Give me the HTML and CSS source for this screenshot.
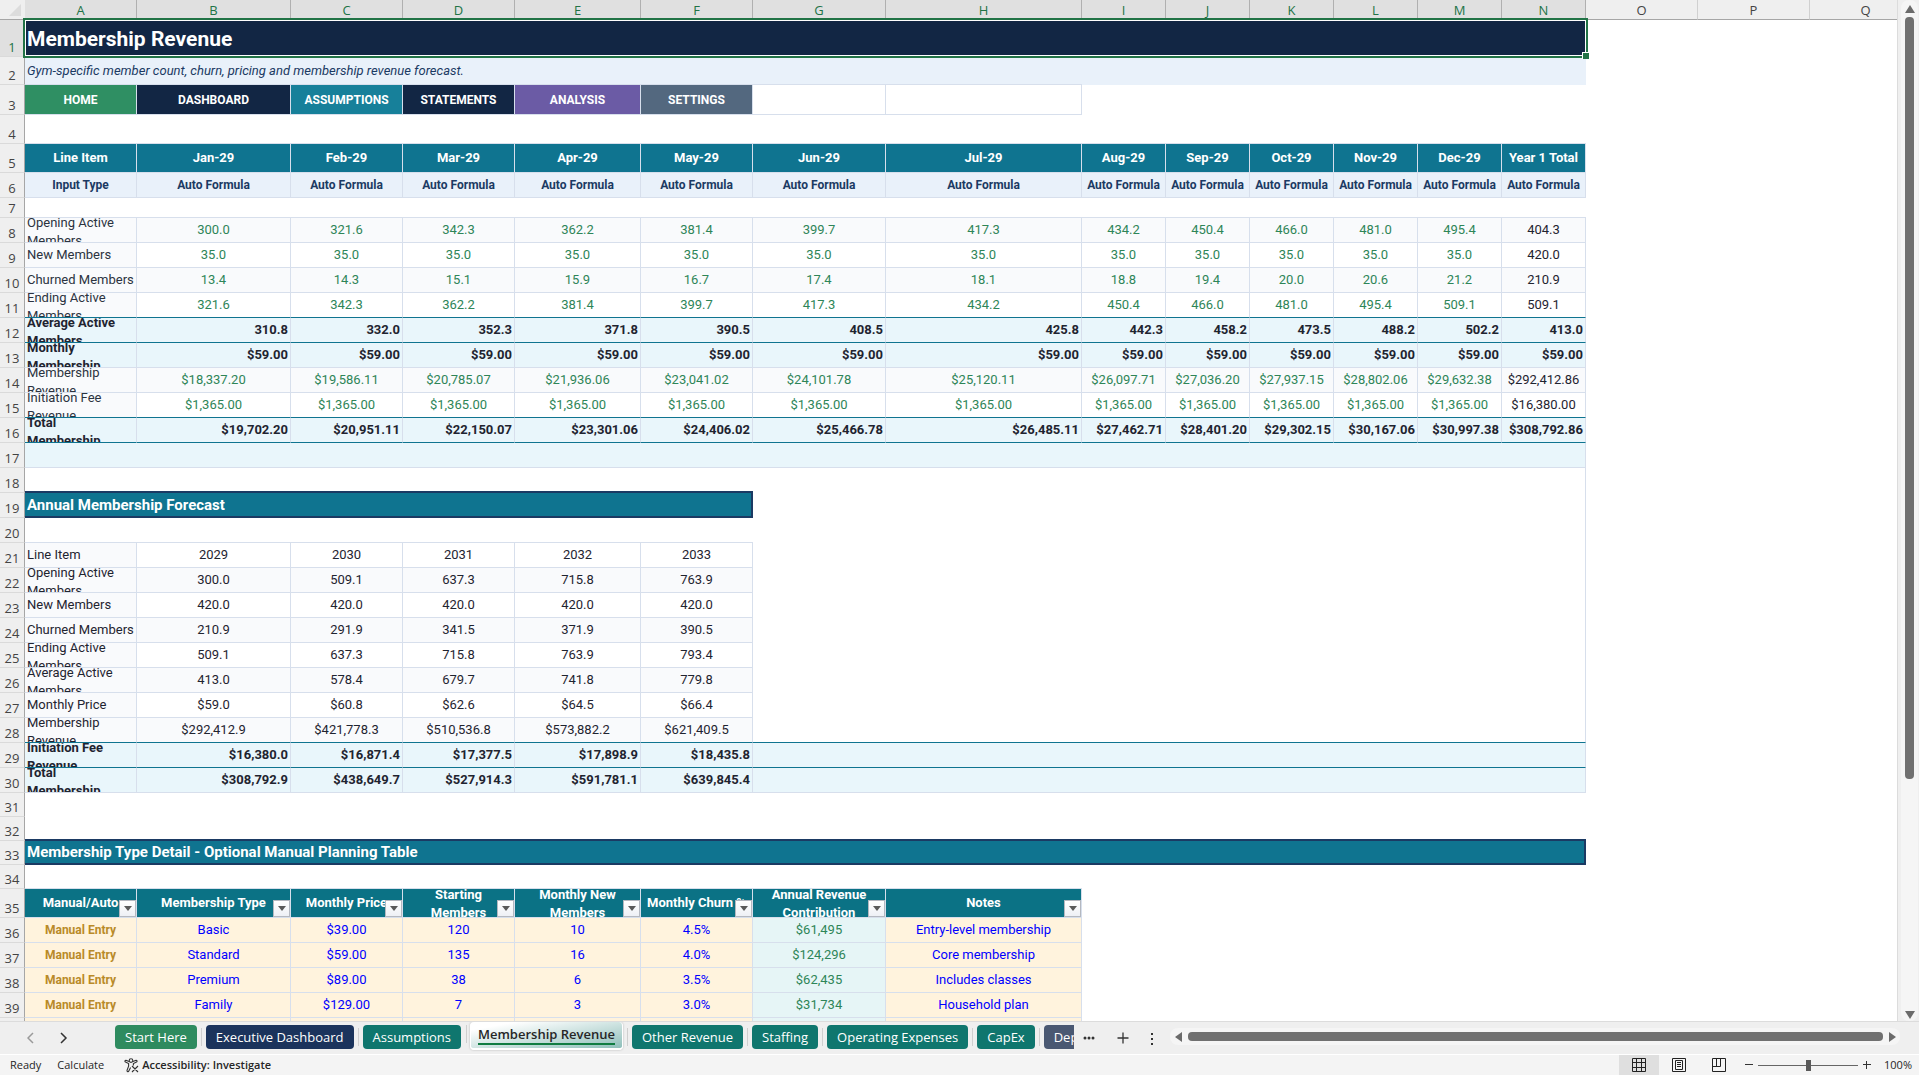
FILE: index.html
```html
<!DOCTYPE html>
<html lang="en">
<head>
<meta charset="utf-8">
<title>Membership Revenue</title>
<link rel="stylesheet" href="styles.css">
</head>
<body>
<main class="workspace">
<div class="viewport">
<table class="sheet">
<colgroup><col class="w-head"><col class="w-m"><col class="w-b"><col class="w-m"><col class="w-m"><col class="w-e"><col class="w-m"><col class="w-g"><col class="w-h"><col class="w-s"><col class="w-s"><col class="w-s"><col class="w-s"><col class="w-s"><col class="w-s"><col class="w-m"><col class="w-m"><col></colgroup>
<thead>
<tr class="letters"><td class="corner"><svg width="12" height="12" viewBox="0 0 12 12"><path d="M12 0V12H0Z" fill="#dcdcdc"/></svg></td><th class="on">A</th><th class="on">B</th><th class="on">C</th><th class="on">D</th><th class="on">E</th><th class="on">F</th><th class="on">G</th><th class="on">H</th><th class="on">I</th><th class="on">J</th><th class="on">K</th><th class="on">L</th><th class="on">M</th><th class="on">N</th><th>O</th><th>P</th><th>Q</th></tr>
</thead>
<tbody>
<tr class="h37"><th class="num on">1</th><td class="title" colspan="14">Membership Revenue<div class="selection"></div></td><td colspan="3"></td></tr>
<tr class="h28"><th class="num">2</th><td class="note edge-b" colspan="8">Gym-specific member count, churn, pricing and membership revenue forecast.</td><td class="note" colspan="6"></td><td colspan="3"></td></tr>
<tr class="h30 nav"><th class="num">3</th><td class="c home"><a href="#">HOME</a></td><td class="c navy"><a href="#">DASHBOARD</a></td><td class="c cyan"><a href="#">ASSUMPTIONS</a></td><td class="c navy"><a href="#">STATEMENTS</a></td><td class="c violet"><a href="#">ANALYSIS</a></td><td class="c slate"><a href="#">SETTINGS</a></td><td class="c"></td><td class="c"></td><td colspan="9"></td></tr>
<tr class="h29"><th class="num">4</th><td class="edge-b" colspan="14"></td><td colspan="3"></td></tr>
<tr class="h29 months"><th class="num">5</th><td class="c">Line Item</td><td class="c">Jan-29</td><td class="c">Feb-29</td><td class="c">Mar-29</td><td class="c">Apr-29</td><td class="c">May-29</td><td class="c">Jun-29</td><td class="c">Jul-29</td><td class="c">Aug-29</td><td class="c">Sep-29</td><td class="c">Oct-29</td><td class="c">Nov-29</td><td class="c">Dec-29</td><td class="c">Year 1 Total</td><td colspan="3"></td></tr>
<tr class="h25 types"><th class="num">6</th><td class="c">Input Type</td><td class="c">Auto Formula</td><td class="c">Auto Formula</td><td class="c">Auto Formula</td><td class="c">Auto Formula</td><td class="c">Auto Formula</td><td class="c">Auto Formula</td><td class="c">Auto Formula</td><td class="c">Auto Formula</td><td class="c">Auto Formula</td><td class="c">Auto Formula</td><td class="c">Auto Formula</td><td class="c">Auto Formula</td><td class="c">Auto Formula</td><td colspan="3"></td></tr>
<tr class="h20"><th class="num">7</th><td class="edge-b" colspan="14"></td><td colspan="3"></td></tr>
<tr class="h25 live band"><th class="num">8</th><td class="c item"><span class="wrap">Opening Active<br>Members</span></td><td class="c">300.0</td><td class="c">321.6</td><td class="c">342.3</td><td class="c">362.2</td><td class="c">381.4</td><td class="c">399.7</td><td class="c">417.3</td><td class="c">434.2</td><td class="c">450.4</td><td class="c">466.0</td><td class="c">481.0</td><td class="c">495.4</td><td class="c sum">404.3</td><td colspan="3"></td></tr>
<tr class="h25 live"><th class="num">9</th><td class="c item">New Members</td><td class="c">35.0</td><td class="c">35.0</td><td class="c">35.0</td><td class="c">35.0</td><td class="c">35.0</td><td class="c">35.0</td><td class="c">35.0</td><td class="c">35.0</td><td class="c">35.0</td><td class="c">35.0</td><td class="c">35.0</td><td class="c">35.0</td><td class="c sum">420.0</td><td colspan="3"></td></tr>
<tr class="h25 live band"><th class="num">10</th><td class="c item">Churned Members</td><td class="c">13.4</td><td class="c">14.3</td><td class="c">15.1</td><td class="c">15.9</td><td class="c">16.7</td><td class="c">17.4</td><td class="c">18.1</td><td class="c">18.8</td><td class="c">19.4</td><td class="c">20.0</td><td class="c">20.6</td><td class="c">21.2</td><td class="c sum">210.9</td><td colspan="3"></td></tr>
<tr class="h25 live ruled"><th class="num">11</th><td class="c item"><span class="wrap">Ending Active<br>Members</span></td><td class="c">321.6</td><td class="c">342.3</td><td class="c">362.2</td><td class="c">381.4</td><td class="c">399.7</td><td class="c">417.3</td><td class="c">434.2</td><td class="c">450.4</td><td class="c">466.0</td><td class="c">481.0</td><td class="c">495.4</td><td class="c">509.1</td><td class="c sum">509.1</td><td colspan="3"></td></tr>
<tr class="h25 total ruled"><th class="num">12</th><td class="c item"><span class="wrap">Average Active<br>Members</span></td><td class="c">310.8</td><td class="c">332.0</td><td class="c">352.3</td><td class="c">371.8</td><td class="c">390.5</td><td class="c">408.5</td><td class="c">425.8</td><td class="c">442.3</td><td class="c">458.2</td><td class="c">473.5</td><td class="c">488.2</td><td class="c">502.2</td><td class="c">413.0</td><td colspan="3"></td></tr>
<tr class="h25 total"><th class="num">13</th><td class="c item"><span class="wrap">Monthly<br>Membership</span></td><td class="c">$59.00</td><td class="c">$59.00</td><td class="c">$59.00</td><td class="c">$59.00</td><td class="c">$59.00</td><td class="c">$59.00</td><td class="c">$59.00</td><td class="c">$59.00</td><td class="c">$59.00</td><td class="c">$59.00</td><td class="c">$59.00</td><td class="c">$59.00</td><td class="c">$59.00</td><td colspan="3"></td></tr>
<tr class="h25 live band"><th class="num">14</th><td class="c item"><span class="wrap">Membership<br>Revenue</span></td><td class="c">$18,337.20</td><td class="c">$19,586.11</td><td class="c">$20,785.07</td><td class="c">$21,936.06</td><td class="c">$23,041.02</td><td class="c">$24,101.78</td><td class="c">$25,120.11</td><td class="c">$26,097.71</td><td class="c">$27,036.20</td><td class="c">$27,937.15</td><td class="c">$28,802.06</td><td class="c">$29,632.38</td><td class="c sum">$292,412.86</td><td colspan="3"></td></tr>
<tr class="h25 live ruled"><th class="num">15</th><td class="c item"><span class="wrap">Initiation Fee<br>Revenue</span></td><td class="c">$1,365.00</td><td class="c">$1,365.00</td><td class="c">$1,365.00</td><td class="c">$1,365.00</td><td class="c">$1,365.00</td><td class="c">$1,365.00</td><td class="c">$1,365.00</td><td class="c">$1,365.00</td><td class="c">$1,365.00</td><td class="c">$1,365.00</td><td class="c">$1,365.00</td><td class="c">$1,365.00</td><td class="c sum">$16,380.00</td><td colspan="3"></td></tr>
<tr class="h25 total ruled"><th class="num">16</th><td class="c item"><span class="wrap">Total<br>Membership</span></td><td class="c">$19,702.20</td><td class="c">$20,951.11</td><td class="c">$22,150.07</td><td class="c">$23,301.06</td><td class="c">$24,406.02</td><td class="c">$25,466.78</td><td class="c">$26,485.11</td><td class="c">$27,462.71</td><td class="c">$28,401.20</td><td class="c">$29,302.15</td><td class="c">$30,167.06</td><td class="c">$30,997.38</td><td class="c">$308,792.86</td><td colspan="3"></td></tr>
<tr class="h25 total"><th class="num">17</th><td class="c" colspan="14"></td><td colspan="3"></td></tr>
<tr class="h25"><th class="num">18</th><td class="edge-r" colspan="14"></td><td colspan="3"></td></tr>
<tr class="h25"><th class="num">19</th><td class="section" colspan="6">Annual Membership Forecast</td><td class="edge-r" colspan="8"></td><td colspan="3"></td></tr>
<tr class="h25"><th class="num">20</th><td class="edge-b" colspan="6"></td><td class="edge-r" colspan="8"></td><td colspan="3"></td></tr>
<tr class="h25 plain"><th class="num">21</th><td class="c item">Line Item</td><td class="c">2029</td><td class="c">2030</td><td class="c">2031</td><td class="c">2032</td><td class="c">2033</td><td class="edge-r" colspan="8"></td><td colspan="3"></td></tr>
<tr class="h25 plain band"><th class="num">22</th><td class="c item"><span class="wrap">Opening Active<br>Members</span></td><td class="c">300.0</td><td class="c">509.1</td><td class="c">637.3</td><td class="c">715.8</td><td class="c">763.9</td><td class="edge-r" colspan="8"></td><td colspan="3"></td></tr>
<tr class="h25 plain"><th class="num">23</th><td class="c item">New Members</td><td class="c">420.0</td><td class="c">420.0</td><td class="c">420.0</td><td class="c">420.0</td><td class="c">420.0</td><td class="edge-r" colspan="8"></td><td colspan="3"></td></tr>
<tr class="h25 plain band"><th class="num">24</th><td class="c item">Churned Members</td><td class="c">210.9</td><td class="c">291.9</td><td class="c">341.5</td><td class="c">371.9</td><td class="c">390.5</td><td class="edge-r" colspan="8"></td><td colspan="3"></td></tr>
<tr class="h25 plain"><th class="num">25</th><td class="c item"><span class="wrap">Ending Active<br>Members</span></td><td class="c">509.1</td><td class="c">637.3</td><td class="c">715.8</td><td class="c">763.9</td><td class="c">793.4</td><td class="edge-r" colspan="8"></td><td colspan="3"></td></tr>
<tr class="h25 plain band"><th class="num">26</th><td class="c item"><span class="wrap">Average Active<br>Members</span></td><td class="c">413.0</td><td class="c">578.4</td><td class="c">679.7</td><td class="c">741.8</td><td class="c">779.8</td><td class="edge-r" colspan="8"></td><td colspan="3"></td></tr>
<tr class="h25 plain"><th class="num">27</th><td class="c item">Monthly Price</td><td class="c">$59.0</td><td class="c">$60.8</td><td class="c">$62.6</td><td class="c">$64.5</td><td class="c">$66.4</td><td class="edge-r" colspan="8"></td><td colspan="3"></td></tr>
<tr class="h25 plain band ruled"><th class="num">28</th><td class="c item"><span class="wrap">Membership<br>Revenue</span></td><td class="c">$292,412.9</td><td class="c">$421,778.3</td><td class="c">$510,536.8</td><td class="c">$573,882.2</td><td class="c">$621,409.5</td><td class="blank c" colspan="8"></td><td colspan="3"></td></tr>
<tr class="h25 total ruled"><th class="num">29</th><td class="c item"><span class="wrap">Initiation Fee<br>Revenue</span></td><td class="c">$16,380.0</td><td class="c">$16,871.4</td><td class="c">$17,377.5</td><td class="c">$17,898.9</td><td class="c">$18,435.8</td><td class="c" colspan="8"></td><td colspan="3"></td></tr>
<tr class="h25 total"><th class="num">30</th><td class="c item"><span class="wrap">Total<br>Membership</span></td><td class="c">$308,792.9</td><td class="c">$438,649.7</td><td class="c">$527,914.3</td><td class="c">$591,781.1</td><td class="c">$639,845.4</td><td class="c" colspan="8"></td><td colspan="3"></td></tr>
<tr class="h24"><th class="num">31</th><td colspan="17"></td></tr>
<tr class="h24"><th class="num">32</th><td colspan="17"></td></tr>
<tr class="h24"><th class="num">33</th><td class="section" colspan="14">Membership Type Detail - Optional Manual Planning Table</td><td colspan="3"></td></tr>
<tr class="h24"><th class="num">34</th><td class="edge-b" colspan="8"></td><td colspan="9"></td></tr>
<tr class="h29 fields"><th class="num">35</th><td class="c">Manual/Auto<button class="filter" aria-label="Filter Manual/Auto"></button></td><td class="c">Membership Type<button class="filter" aria-label="Filter Membership Type"></button></td><td class="c">Monthly Price<button class="filter" aria-label="Filter Monthly Price"></button></td><td class="c"><span class="wrap">Starting<br>Members</span><button class="filter" aria-label="Filter Starting Members"></button></td><td class="c"><span class="wrap">Monthly New<br>Members</span><button class="filter" aria-label="Filter Monthly New Members"></button></td><td class="c">Monthly Churn %<button class="filter" aria-label="Filter Monthly Churn"></button></td><td class="c"><span class="wrap">Annual Revenue<br>Contribution</span><button class="filter" aria-label="Filter Annual Revenue Contribution"></button></td><td class="c">Notes<button class="filter" aria-label="Filter Notes"></button></td><td colspan="9"></td></tr>
<tr class="h25 entry"><th class="num">36</th><td class="c manual">Manual Entry</td><td class="c">Basic</td><td class="c">$39.00</td><td class="c">120</td><td class="c">10</td><td class="c">4.5%</td><td class="c calc">$61,495</td><td class="c">Entry-level membership</td><td colspan="9"></td></tr>
<tr class="h25 entry"><th class="num">37</th><td class="c manual">Manual Entry</td><td class="c">Standard</td><td class="c">$59.00</td><td class="c">135</td><td class="c">16</td><td class="c">4.0%</td><td class="c calc">$124,296</td><td class="c">Core membership</td><td colspan="9"></td></tr>
<tr class="h25 entry"><th class="num">38</th><td class="c manual">Manual Entry</td><td class="c">Premium</td><td class="c">$89.00</td><td class="c">38</td><td class="c">6</td><td class="c">3.5%</td><td class="c calc">$62,435</td><td class="c">Includes classes</td><td colspan="9"></td></tr>
<tr class="h25 entry"><th class="num">39</th><td class="c manual">Manual Entry</td><td class="c">Family</td><td class="c">$129.00</td><td class="c">7</td><td class="c">3</td><td class="c">3.0%</td><td class="c calc">$31,734</td><td class="c">Household plan</td><td colspan="9"></td></tr>
<tr class="h25 entry"><th class="num"></th><td class="c"></td><td class="c"></td><td class="c"></td><td class="c"></td><td class="c"></td><td class="c"></td><td class="c calc"></td><td class="c"></td><td colspan="9"></td></tr>
</tbody>
</table>
</div>
<div class="vscroll"><span class="arrow up"></span><span class="lane"><span class="thumb"></span></span><span class="arrow down"></span></div>
</main>

<nav class="tabbar" aria-label="Sheets">
<div class="steps"><button aria-label="Previous sheet"><svg width="8" height="12" viewBox="0 0 8 12"><path d="M6 1 1 6l5 5" fill="none" stroke="#9a9a9a" stroke-width="1.5"/></svg></button><button aria-label="Next sheet"><svg width="8" height="12" viewBox="0 0 8 12"><path d="M1 1l5 5-5 5" fill="none" stroke="#333" stroke-width="1.5"/></svg></button></div>
<div class="tabs">
<button class="tab green">Start Here</button><button class="tab blue">Executive Dashboard</button><button class="tab">Assumptions</button><button class="tab current"><span>Membership Revenue</span></button><button class="tab">Other Revenue</button><button class="tab">Staffing</button><button class="tab">Operating Expenses</button><button class="tab">CapEx</button><button class="tab gray">Depreciation</button>
</div>
<div class="tools"><button aria-label="More sheets"><svg width="12" height="4" viewBox="0 0 12 4" fill="#333"><circle cx="2" cy="2" r="1.5"/><circle cx="6" cy="2" r="1.5"/><circle cx="10" cy="2" r="1.5"/></svg></button><button aria-label="New sheet"><svg width="12" height="12" viewBox="0 0 12 12"><path d="M6 .5v11M.5 6h11" stroke="#333" stroke-width="1.3"/></svg></button><button aria-label="Resize tab bar"><svg width="4" height="14" viewBox="0 0 4 14" fill="#333"><path d="M1 2h2v2H1zM1 7h2v2H1zM1 12h2v2H1z"/></svg></button></div>
<div class="hscroll"><span class="arrow left"></span><span class="lane"></span><span class="arrow right"></span></div>
</nav>

<footer class="status">
<span class="ready">Ready</span><span class="calcstate">Calculate</span>
<svg width="15" height="15" viewBox="0 0 15 15" fill="none" stroke="#333" stroke-width="1.1"><circle cx="7" cy="2.6" r="1.8"/><path d="M5 3.6 2 2.2C.6 2.2.7 3.6 1.500 4L4.600 5.600V8.200L3 12.400C2.800 13.800 4.400 14 4.800 13L6.600 9.400M9 3.600l3-1.400c1.400 0 1.300 1.400.5 1.800L9.400 5.600V7.500M8 8l6 6M14 8l-6 6"/></svg>
<strong>Accessibility: Investigate</strong>
<div class="views"><button class="active" aria-label="Normal view"><svg width="14" height="14" viewBox="0 0 14 14" fill="none" stroke="#222"><path d="M.5.5h13v13H.5zM.5 4.500h13M.5 9.500h13M4.500.5v13M9.500.5v13"/></svg></button><button aria-label="Page layout"><svg width="14" height="14" viewBox="0 0 14 14" fill="none" stroke="#222"><path d="M.5.5h13v13H.5zM3.500 2.500h7v9h-7zM5 4.500h4M5 6.500h4M5 8.500h4"/></svg></button><button aria-label="Page break preview"><svg width="14" height="14" viewBox="0 0 14 14" fill="none" stroke="#222"><path d="M.5.5h13v13H.5zM.5 8.500h8v-8M4.500.5v8"/></svg></button></div>
<div class="zoom"><button aria-label="Zoom out"><svg width="8" height="8" viewBox="0 0 8 8"><path d="M0 3.500h8" stroke="#333"/></svg></button><input type="range" min="0" max="100" value="50" aria-label="Zoom"><button aria-label="Zoom in"><svg width="8" height="8" viewBox="0 0 8 8"><path d="M0 3.500h8M3.500 0v8" stroke="#333"/></svg></button></div>
<span class="percent">100%</span>
</footer>
</body>
</html>
```
FILE: styles.css
```css
:root {
  --grid: #d7dfec;
  --teal: #0f7490;
  --navy: #122644;
  --ink: #1f2430;
  --chrome: #efefef;
  --ui: "Open Sans", "Noto Sans", sans-serif;
}

* { box-sizing: border-box; }

body {
  margin: 0;
  height: 100vh;
  display: flex;
  flex-direction: column;
  overflow: hidden;
  background: var(--chrome);
  color: var(--ink);
  font: 13px/18px Roboto, "Liberation Sans", sans-serif;
}

button {
  border: 0;
  padding: 0;
  background: none;
  font: inherit;
  color: inherit;
}

svg { display: block; }

/* Worksheet */
.workspace { flex: 1; min-height: 0; display: flex; }

.viewport {
  flex: 1;
  min-width: 0;
  overflow: hidden;
  background: #fff;
  border-right: 1px solid #dcdcdc;
}

.sheet {
  table-layout: fixed;
  width: 100%;
  min-width: 1922px;
  border-collapse: separate;
  border-spacing: 0;
}

.w-head { width: 25px; }
.w-m { width: 112px; }
.w-b { width: 154px; }
.w-e { width: 126px; }
.w-g { width: 133px; }
.w-h { width: 196px; }
.w-s { width: 84px; }

.sheet td, .sheet th { padding: 0; white-space: nowrap; }

.h20 { height: 20px; }
.h24 { height: 24px; }
.h25 { height: 25px; }
.h28 { height: 28px; }
.h29 { height: 29px; }
.h30 { height: 30px; }
.h37 { height: 37px; }

.letters { height: 20px; }
.letters th, .letters td {
  background: var(--chrome);
  border-bottom: 1px solid #a6a6a6;
}
.letters th {
  border-right: 1px solid #d0d0d0;
  font: 13px/18px var(--ui);
  color: #444;
}
.letters th.on { background: #e0e0e0; border-right-color: #b0b0b0; color: #217346; }
.corner svg { margin-left: 9px; }

.sheet th.num {
  background: var(--chrome);
  border-right: 1px solid #a6a6a6;
  border-bottom: 1px solid #dadada;
  font: 13px/18px var(--ui);
  color: #444;
  vertical-align: bottom;
}
.sheet th.num.on { background: #e0e0e0; color: #217346; }

.c {
  border-right: 1px solid var(--grid);
  border-bottom: 1px solid var(--grid);
  text-align: center;
}
.edge-b { border-bottom: 1px solid var(--grid); }
.edge-r { border-right: 1px solid var(--grid); }

.sheet .title {
  position: relative;
  z-index: 1;
  padding-left: 2px;
  background: var(--navy);
  color: #fff;
  font-size: 21px;
  font-weight: 700;
}
.selection {
  position: absolute;
  inset: -2px -2px -1px -2px;
  border: 2px solid #217346;
  box-shadow: inset 0 0 0 1px #fff;
}
.selection::after {
  content: "";
  position: absolute;
  right: -3px;
  bottom: -3px;
  width: 6px;
  height: 6px;
  background: #217346;
  border: solid #fff;
  border-width: 1px 0 0 1px;
}

.sheet .note {
  padding-left: 2px;
  background: #e9f1fa;
  color: #1b3a63;
  font-style: italic;
}

.nav { font-size: 12px; font-weight: 700; }
.nav a { color: #fff; text-decoration: none; }
.home { background: #2f8f63; }
.navy { background: var(--navy); }
.cyan { background: #17809a; }
.violet { background: #6b5ba5; }
.slate { background: #53687f; }

.months { font-weight: 700; color: #fff; }
.months .c { background: var(--teal); }
.types { font-size: 12px; font-weight: 700; color: #1b3a63; }
.types .c { background: #e9f1fa; }

.live .c { color: #2e8558; }
.live .sum { color: var(--ink); }
.band .c, .live .item, .plain .item { background: #f9fafc; }
.band .blank { background: #fff; }

.sheet .item { padding-left: 2px; text-align: left; }
.live .item { color: #2b3340; }

.wrap {
  display: flex;
  align-items: center;
  height: 24px;
  padding-top: 3px;
  overflow: hidden;
}

.total { font-weight: 700; }
.total .c { background: #e9f6fb; text-align: right; padding-right: 2px; }
.total .item { text-align: left; }
.ruled .c { border-bottom-color: var(--teal); }

.sheet .section {
  padding-left: 2px;
  background: var(--teal);
  border: solid #1b3a63;
  border-width: 0 2px 2px 0;
  box-shadow: 0 -2px 0 #1b3a63;
  color: #fff;
  font-size: 15px;
  font-weight: 700;
}

.fields { font-weight: 700; color: #fff; }
.fields .c { position: relative; background: #0b7285; }
.fields .wrap { height: 28px; padding-top: 2px; justify-content: center; }
.filter {
  position: absolute;
  right: 0;
  bottom: 0;
  width: 17px;
  height: 17px;
  display: grid;
  place-items: center;
  background: linear-gradient(#fff, #eef0f5);
  border: 1px solid #b4b8c0;
}
.filter::before {
  content: "";
  border: solid transparent;
  border-width: 5px 4px 0;
  border-top-color: #5a5a5a;
}

.entry .c { background: #fff3dd; color: #00f; }
.entry .manual { color: #b98a28; font-size: 12px; font-weight: 700; }
.entry .calc { background: #e6f5f6; color: #2e8558; }

/* Scroll bars */
.arrow { flex: none; border: solid transparent; }
.up { border-width: 0 5px 8px; border-bottom-color: #6b6b6b; }
.down { border-width: 8px 5px 0; border-top-color: #6b6b6b; }
.left { border-width: 5px 7px 5px 0; border-right-color: #6b6b6b; }
.right { border-width: 5px 0 5px 7px; border-left-color: #6b6b6b; }

.vscroll {
  flex: none;
  width: 17px;
  margin: 0 1px 0 3px;
  padding: 5px 0 2px;
  display: flex;
  flex-direction: column;
  align-items: center;
  gap: 4px;
  background: #f5f5f5;
  border-radius: 8px;
}
.vscroll .lane { flex: 1; width: 9px; }
.thumb { display: block; height: 77%; background: #707070; border-radius: 4px; }

/* Sheet tabs */
.tabbar {
  flex: none;
  height: 33px;
  display: flex;
  border-top: 1px solid #dcdcdc;
  font: 13px/18px var(--ui);
}
.steps { flex: none; width: 115px; display: flex; align-items: center; gap: 25px; padding-left: 27px; }
.tabs {
  flex: 0 1 959px;
  min-width: 0;
  display: flex;
  overflow: hidden;
  gap: 9px;
}
.tab {
  position: relative;
  flex: none;
  height: 24px;
  margin-top: 3px;
  padding: 0 10px;
  border-radius: 4px;
  background: #0f766e;
  color: #fff;
}
.tab + .tab::before {
  content: "";
  position: absolute;
  left: -5px;
  top: 3px;
  width: 1px;
  height: 18px;
  background: #cfcfcf;
}
.green { background: #2e8b5f; }
.blue { background: #1b335c; }
.gray { background: #4a5872; }
.current {
  height: 28px;
  margin-top: 0;
  padding: 0 7px;
  border: solid #fff;
  border-width: 0 1px 2px;
  background: linear-gradient(170deg, #fff 15%, #8fbfba);
  box-shadow: 0 0 2px #aaa;
  color: #262626;
  font-weight: 600;
}
.tab.current span { display: block; border-bottom: 2px solid #107c41; }

.tools { flex: none; width: 96px; display: flex; align-items: center; justify-content: space-between; padding: 0 16px 0 9px; }
.hscroll {
  flex: 1;
  height: 17px;
  margin: 6px 19px 0 0;
  padding: 0 4px 0 5px;
  display: flex;
  align-items: center;
  gap: 6px;
  background: #f5f5f5;
  border-radius: 8px;
}
.hscroll .lane { flex: 1; height: 9px; background: #707070; border-radius: 4px; }

/* Status bar */
.status {
  flex: none;
  height: 21px;
  display: flex;
  align-items: center;
  background: #f4f4f4;
  border-top: 1px solid #fff;
  font: 11px/16px var(--ui);
  color: #262626;
}
.ready { margin: 0 16px 0 10px; }
.calcstate { margin-right: 20px; }
.status strong { margin-left: 3px; font-weight: 600; }
.views { display: flex; align-self: stretch; margin-left: auto; }
.views button { width: 40px; display: grid; place-items: center; }
.views .active { background: #dfdfdf; }
.zoom { display: flex; align-items: center; gap: 5px; margin-left: 6px; }
.zoom input {
  appearance: none;
  width: 100px;
  height: 12px;
  margin: 0;
  background: linear-gradient(#666, #666) center / 100% 1px no-repeat;
}
.zoom input::-webkit-slider-thumb { appearance: none; width: 5px; height: 11px; background: #5a5a5a; }
.percent { width: 48px; padding-right: 7px; text-align: right; }
```
